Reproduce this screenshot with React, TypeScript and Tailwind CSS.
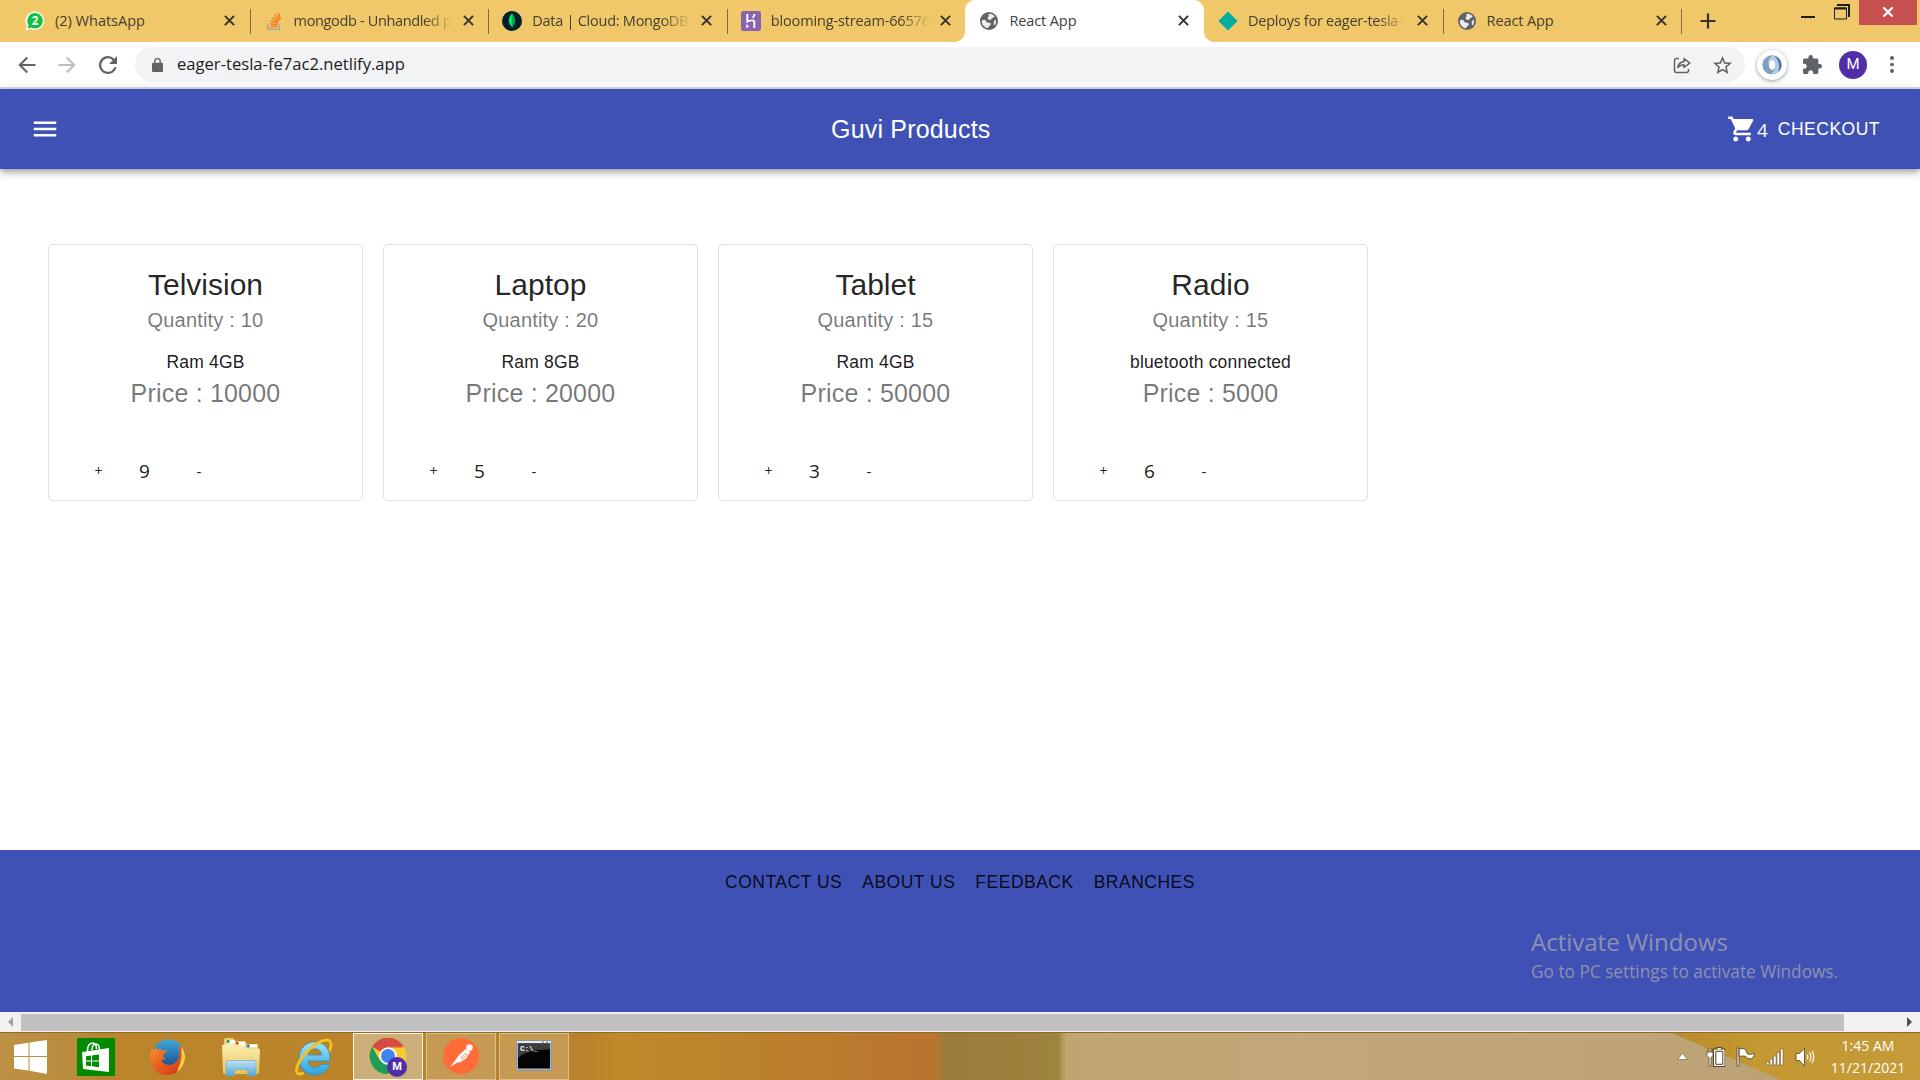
import React from "react";

const ui = "font-['Open_Sans','Noto_Sans',sans-serif]";

function WhatsAppIcon() {
  return (
    <svg viewBox="0 0 20 20" className="h-5 w-5">
      <path d="M10 .6a9.2 9.2 0 0 1 0 18.4c-1.400 0-2.700-.3-3.900-.9L.6 19.600l1.300-5A9.200 9.200 0 0 1 10 .6Z" fill="#fff" />
      <path d="M10 2a7.800 7.800 0 0 1 0 15.600c-1.400 0-2.600-.3-3.700-1L2.600 17.600l1-3.500A7.800 7.800 0 0 1 10 2Z" fill="#12c143" />
      <text x="10" y="14" textAnchor="middle" fontSize="11.500" fontWeight="700" fill="#fff" fontFamily="Open Sans, sans-serif">2</text>
    </svg>
  );
}

function StackIcon() {
  return (
    <svg viewBox="0 0 20 20" className="h-5 w-5" fill="none">
      <path d="M3.800 12.500v5.800h11.600v-5.800" stroke="#a9a99c" strokeWidth="1.500" />
      <g stroke="#f48024" strokeWidth="1.700">
        <path d="M6 15.500h7.400M6.200 12.800l7.300.8M6.900 9.900l7 2M8.400 6.800l6.200 3.700M10.900 3.800l4.500 5.800M14.300 2l2 7" />
      </g>
    </svg>
  );
}

function MongoIcon() {
  return (
    <svg viewBox="0 0 20 20" className="h-5 w-5">
      <circle cx="10" cy="10" r="10" fill="#001e2b" />
      <path d="M10 2.500c2 2.400 3.200 4.500 3.200 7 0 2.700-1.400 4.600-2.800 5.700L10.200 17h-.4l-.2-1.800c-1.400-1.100-2.800-3-2.800-5.700 0-2.500 1.200-4.600 3.200-7Z" fill="#00ed64" />
      <path d="M10 2.500c2 2.400 3.200 4.500 3.200 7 0 2.700-1.400 4.600-2.800 5.700L10.200 17H10Z" fill="#00a84a" />
    </svg>
  );
}

function HerokuIcon() {
  return (
    <svg viewBox="0 0 20 20" className="h-5 w-5">
      <rect width="20" height="20" rx="2.500" fill="#8a63ae" />
      <path d="M6.300 3v7.600c2-1 7-2.300 7 .4v6" fill="none" stroke="#fff" strokeWidth="1.900" />
      <path d="M13.500 3c-.1 1.500-.8 2.700-1.700 3.800" fill="none" stroke="#fff" strokeWidth="1.900" />
      <path d="m5.400 13 2.600 2.200-2.600 2.200Z" fill="#fff" />
    </svg>
  );
}

function GlobeIcon() {
  return (
    <svg viewBox="0 0 20 20" className="h-5 w-5">
      <circle cx="10" cy="10" r="9" fill="#5f6368" />
      <path d="M2.800 9.500c1.300-.8 2.600-.9 3.700-.3 1 .7.600 2 1.700 2.400 1.300.3 2.500-.4 3.300.6.900 1.300-.3 2.400-1.300 3-.8.600-.6 1.500-1.600 2C5 16.600 2.600 13.500 2.800 9.500ZM9.500 2.900c2.600-.3 4.800.8 6.100 2.600-.2 1.300-1.500 1-2.400 1.400-.9.500-.4 1.600-1.400 1.900-1 .3-2.300-.1-3-.9-.8-1.100.3-1.900.9-2.700.4-.6-.4-1.400-.2-2.300ZM16.700 8.500c.6 2.200.3 4.200-1 5.900-.8-.4-1.100-1.400-1-2.400.1-1.300.8-2.900 2-3.500Z" fill="#fff" fillOpacity=".88" />
    </svg>
  );
}

function NetlifyIcon() {
  return (
    <svg viewBox="0 0 20 20" className="h-5 w-5">
      <path d="M10 .6 19.600 10 10 19.400.4 10Z" fill="#00ad9f" />
    </svg>
  );
}

function CloseX({ className = "" }: { className?: string }) {
  return (
    <svg viewBox="0 0 12 12" className={`h-[11px] w-[11px] shrink-0 ${className}`}>
      <path d="M1 1l10 10M11 1 1 11" stroke="#33312c" strokeWidth="2.100" />
    </svg>
  );
}

type Tab = { icon: React.ReactNode; title: string; track: string; active?: boolean; fade?: boolean; sep?: boolean };

const tabs: Tab[] = [
  { icon: <WhatsAppIcon />, title: "(2) WhatsApp", track: "tracking-[0px]", sep: true },
  { icon: <StackIcon />, title: "mongodb - Unhandled p", track: "tracking-[-0.350px]", fade: true, sep: true },
  { icon: <MongoIcon />, title: "Data | Cloud: MongoDB", track: "tracking-[-0.250px]", fade: true, sep: true },
  { icon: <HerokuIcon />, title: "blooming-stream-66576", track: "tracking-[-0.150px]", fade: true },
  { icon: <GlobeIcon />, title: "React App", track: "tracking-[-0.100px]", active: true },
  { icon: <NetlifyIcon />, title: "Deploys for eager-tesla-", track: "tracking-[-0.250px]", fade: true, sep: true },
  { icon: <GlobeIcon />, title: "React App", track: "tracking-[-0.100px]", sep: true },
];

function TabStrip() {
  return (
    <div className={`flex h-[42px] shrink-0 bg-[#f0c869] pl-[11px] ${ui}`}>
      {tabs.map((t, i) => (
        <div key={i} className={`relative flex h-full w-[238.600px] shrink-0 items-center pb-px pl-[14px] ${t.active ? "rounded-t-[10px] bg-white" : ""}`}>
          {t.active && (
            <>
              <span className="absolute bottom-0 -left-[10px] h-[10px] w-[10px] bg-[radial-gradient(circle_at_0_0,transparent_9.500px,white_10px)]" />
              <span className="absolute -right-[10px] bottom-0 h-[10px] w-[10px] bg-[radial-gradient(circle_at_100%_0,transparent_9.500px,white_10px)]" />
            </>
          )}
          <span className="shrink-0">{t.icon}</span>
          <span className={`ml-[10px] w-[159px] shrink-0 text-[14.500px] leading-5 whitespace-nowrap ${t.track} ${t.active ? "text-[#3c4043]" : "text-[#45402f]"} ${t.fade ? "[mask-image:linear-gradient(to_right,black_82%,transparent_100%)]" : ""}`}>
            {t.title}
          </span>
          <CloseX className="ml-[10px]" />
          {t.sep && <span className="absolute top-[9px] -right-px h-[25px] w-px bg-[#7d6c40]" />}
        </div>
      ))}
      <svg viewBox="0 0 16 16" className="mt-[13px] ml-[19px] h-4 w-4"><path d="M8 .5v15M.5 8h15" stroke="#33312c" strokeWidth="2.200" /></svg>
      <div className="ml-auto flex items-start">
        <span className="mt-4 h-[2px] w-[14px] bg-[#1e1e1e]" />
        <svg viewBox="0 0 16 16" className="mt-1 ml-[19px] h-4 w-4" fill="none">
          <path d="M3 1h12v12" stroke="#1e1e1e" strokeWidth="2" />
          <path d="M.5 4h12v11H.5Z" stroke="#1e1e1e" />
          <path d="M.5 4.500h12" stroke="#1e1e1e" strokeWidth="2" />
        </svg>
        <div className="mr-[3px] ml-[9px] flex h-[25px] w-[58px] items-center justify-center bg-[#c75050] pb-[2px]">
          <svg viewBox="0 0 12 10" className="h-[10px] w-3"><path d="M1.500.5l9 9M10.500.5l-9 9" stroke="#fff" strokeWidth="2.200" /></svg>
        </div>
      </div>
    </div>
  );
}

function Toolbar() {
  return (
    <div className={`flex h-[47px] shrink-0 items-center border-b-2 border-[#d8d9dc] bg-white ${ui}`}>
      <svg viewBox="0 0 18 18" className="ml-[18px] h-[18px] w-[18px]" fill="none" stroke="#5f6368" strokeWidth="2"><path d="M17.500 9H2M9.300 1.500 1.800 9l7.500 7.500" /></svg>
      <svg viewBox="0 0 18 18" className="ml-[22px] h-[18px] w-[18px]" fill="none" stroke="#bcbec1" strokeWidth="2"><path d="M.5 9H16M8.700 1.500 16.200 9l-7.500 7.500" /></svg>
      <svg viewBox="4 4 16 16" className="ml-[22.500px] h-[18px] w-[18px]" fill="#5f6368"><path d="M17.650 6.350A7.958 7.958 0 0 0 12 4a8 8 0 1 0 7.730 10h-2.080A6 6 0 1 1 12 6c1.660 0 3.140.69 4.220 1.780L13 11h7V4l-2.350 2.350z" /></svg>
      <div className="ml-[18.500px] flex h-[35px] w-[1610px] items-center rounded-full bg-[#f1f3f4]">
        <svg viewBox="0 0 12 15" className="ml-[17px] h-[14px] w-[11px]"><rect y="5" width="12" height="10" rx="1.300" fill="#5f6368" /><path d="M3 6V3.600a3 3 0 0 1 6 0V6" fill="none" stroke="#5f6368" strokeWidth="1.500" /></svg>
        <span className="ml-[14px] text-[16.600px] text-[#202124]">eager-tesla-fe7ac2.netlify.app</span>
        <svg viewBox="0 0 18 18" className="mr-[22px] ml-auto h-[18px] w-[18px]" fill="none" stroke="#5f6368" strokeWidth="1.500">
          <path d="M6 2.500H3.500a2 2 0 0 0-2 2v10a2 2 0 0 0 2 2h10a2 2 0 0 0 2-2V13" />
          <path d="M4.800 11.500c.4-3.700 2.700-5.500 6.200-5.700V2.500L16.800 7.200 11 11.500V8.700c-2.800 0-4.700.9-6.200 2.800Z" strokeLinejoin="round" />
        </svg>
        <svg viewBox="2 2 20 19" className="mr-[13px] h-[18px] w-[19px]" fill="#5f6368"><path d="M22 9.240l-7.190-.62L12 2 9.190 8.630 2 9.240l5.460 4.730L5.820 21 12 17.270 18.180 21l-1.630-7.030L22 9.240zM12 15.400l-3.760 2.270 1-4.280-3.320-2.880 4.380-.38L12 6.100l1.710 4.040 4.380.38-3.320 2.880 1 4.280L12 15.400z" /></svg>
      </div>
      <div className="ml-3 flex h-[30px] w-[30px] items-center justify-center rounded-full bg-white shadow-[0_1px_4px_rgba(0,0,0,.4)]">
        <svg viewBox="0 0 20 20" className="h-5 w-5">
          <path d="M12 .6A9.500 9.500 0 0 0 8 19.300C12 19 14.500 14 13.300 10 12.500 6.500 9 5.500 7 8c0-3 2-6 5-7.400Z" fill="#7f9fc2" />
          <path d="M8 19.300A9.500 9.500 0 0 0 12 .6C8 1 5.500 6 6.700 10c.8 3.500 4.300 4.500 6.300 2 0 3-2 6-5 7.300Z" fill="#b5cbe0" />
          <path d="M12 .6a9.500 9.500 0 0 1 4 16.700c2-5 1.500-12-4-16.700Z" fill="#4f7aa8" />
          <ellipse cx="10" cy="10" rx="3" ry="4.700" fill="#fff" />
        </svg>
      </div>
      <svg viewBox="2 1 21 21" className="ml-4 h-[19px] w-[19px]" fill="#5f6368"><path d="M20.500 11H19V7c0-1.100-.9-2-2-2h-4V3.500a2.500 2.500 0 0 0-5 0V5H4c-1.100 0-1.990.9-1.990 2v3.800H3.500c1.490 0 2.700 1.210 2.700 2.700s-1.210 2.700-2.700 2.700H2V20c0 1.100.9 2 2 2h3.800v-1.500c0-1.490 1.210-2.700 2.700-2.700s2.700 1.210 2.700 2.700V22H17c1.100 0 2-.9 2-2v-4h1.500a2.500 2.500 0 0 0 0-5z" /></svg>
      <div className="ml-[17px] flex h-7 w-7 items-center justify-center rounded-full bg-[#512da8] font-['Roboto',sans-serif] text-[15px] text-white">M</div>
      <div className="ml-[23px] flex flex-col gap-[3px]">
        <span className="h-[3.500px] w-[3.500px] rounded-full bg-[#5f6368]" />
        <span className="h-[3.500px] w-[3.500px] rounded-full bg-[#5f6368]" />
        <span className="h-[3.500px] w-[3.500px] rounded-full bg-[#5f6368]" />
      </div>
    </div>
  );
}

function AppBar() {
  return (
    <header className="relative flex h-20 shrink-0 items-center bg-[#3f51b5] px-[30px] text-white shadow-[0_2.500px_5px_-1px_rgba(0,0,0,.2),0_5px_6px_0_rgba(0,0,0,.14),0_1px_12px_0_rgba(0,0,0,.12)]">
      <svg viewBox="0 0 24 24" className="h-[30px] w-[30px]" fill="currentColor"><path d="M3 18h18v-2H3v2zm0-5h18v-2H3v2zm0-7v2h18V6H3z" /></svg>
      <h1 className="ml-[771px] text-[25px] leading-10 tracking-[0.190px]">Guvi Products</h1>
      <svg viewBox="0 0 24 24" className="ml-auto h-[30px] w-[30px]" fill="currentColor"><path d="M7 18c-1.100 0-1.990.9-1.990 2S5.900 22 7 22s2-.9 2-2-.9-2-2-2zM1 2v2h2l3.600 7.590-1.350 2.450c-.16.28-.25.61-.25.960 0 1.100.9 2 2 2h12v-2H7.420c-.14 0-.25-.11-.25-.25l.03-.12.9-1.630h7.450c.75 0 1.410-.41 1.750-1.030l3.580-6.490c.08-.14.12-.31.12-.48 0-.55-.45-1-1-1H5.210l-.94-2H1zm16 16c-1.100 0-1.990.9-1.990 2s.89 2 1.990 2 2-.9 2-2-.9-2-2-2z" /></svg>
      <span className={`mt-[3px] text-[19px] ${ui}`}>4</span>
      <span className="mr-[10px] ml-[10px] text-[17.500px] tracking-[0.500px]">CHECKOUT</span>
    </header>
  );
}

const products = [
  { name: "Telvision", quantity: 10, detail: "Ram 4GB", price: 10000, count: 9 },
  { name: "Laptop", quantity: 20, detail: "Ram 8GB", price: 20000, count: 5 },
  { name: "Tablet", quantity: 15, detail: "Ram 4GB", price: 50000, count: 3 },
  { name: "Radio", quantity: 15, detail: "bluetooth connected", price: 5000, count: 6 },
];

function ProductCard({ p }: { p: (typeof products)[number] }) {
  return (
    <article className="flex h-[257px] w-[315px] shrink-0 flex-col rounded-[5px] border border-[#e0e0e0] bg-white pt-5 text-center">
      <h2 className="text-[30px] leading-10 text-black/87">{p.name}</h2>
      <p className="text-[20px] leading-[30px] tracking-[0.190px] text-black/54">Quantity : {p.quantity}</p>
      <p className="mt-[15px] text-[17.500px] leading-[25px] tracking-[0.180px] text-black/90">{p.detail}</p>
      <p className="text-[25px] leading-9 tracking-[0.190px] text-black/54">Price : {p.price}</p>
      <div className={`mt-[43px] flex h-[34px] items-center text-[#212121] ${ui}`}>
        <span className="w-[99px] text-center text-[14px] leading-5">+</span>
        <span className="-ml-[10px] w-[13px] text-center text-[19px] leading-6">{p.count}</span>
        <span className="ml-[43px] w-[10px] text-center text-[15px] leading-5">-</span>
      </div>
    </article>
  );
}

function StartIcon() {
  return (
    <svg viewBox="0 0 34 34" className="h-[34px] w-[34px]" fill="#fff">
      <path d="M0 5 14.500 2.800V16H0ZM15.500 2.600 33 0v16H15.500ZM0 17h14.500v13.500L0 28.500ZM15.500 17H33v17l-17.500-3.200Z" />
    </svg>
  );
}

function StoreIcon() {
  return (
    <svg viewBox="0 0 38 38" className="h-[38px] w-[38px]">
      <rect width="38" height="38" fill="#008a00" />
      <path d="M10.500 14c-.5-6 2-9 5-9s4 3 4 6M15 12c0-4 2-6 4-6 2.500 0 3.500 3 3.500 6" fill="none" stroke="#fff" strokeWidth="1.500" />
      <path d="m5 14 27-4v24L6 31Z" fill="#fff" />
      <path d="m9 18.300 5-.7v4.900H9ZM15 17.500l7-1v6h-7ZM9 23.500h5v4.700l-5-.6ZM15 23.500h7v5.700l-7-.9Z" fill="#008a00" />
    </svg>
  );
}

function FirefoxIcon() {
  return (
    <svg viewBox="0 0 38 38" className="h-[38px] w-[38px]">
      <defs>
        <linearGradient id="fx" x1="0" y1="0" x2="1" y2="1"><stop offset="0" stopColor="#f39a2e" /><stop offset=".5" stopColor="#e65a1f" /><stop offset="1" stopColor="#c9381c" /></linearGradient>
        <linearGradient id="fxb" x1="0" y1="0" x2="0" y2="1"><stop offset="0" stopColor="#3fa9dd" /><stop offset="1" stopColor="#123a7d" /></linearGradient>
      </defs>
      <circle cx="19.500" cy="18" r="16.500" fill="url(#fxb)" />
      <path d="M32 8c4 5 5 11 3 17-3 8-9 12-17 12C8 37 1 29.500 1 20c0-4 .8-7.500 3-10.500l.5 3c1-1.500 2-3 3.500-3.500-.3 1.500.2 2 .5 2.500 2.500-.8 4 0 6 1.200 1.500-.8 3-.7 3.500-.2-1 2.500-4 3.500-4 5.500 0 1.200 1.500 1.500 3 1.500-1 2.500-3.500 2-5 3 2.500 4 8.500 6 13 3 5-3 6.500-9 4.500-16.500Z" fill="url(#fx)" />
      <path d="M32 8c4 5 5 11 3 17-2 4.500-4 7-7 9 2-6 4-10 4.500-15 .2-4 .2-8-.5-11Z" fill="#fcd23c" />
    </svg>
  );
}

function ExplorerIcon() {
  return (
    <svg viewBox="0 0 40 38" className="h-[38px] w-10">
      <defs>
        <linearGradient id="fold" x1="0" y1="0" x2="0" y2="1"><stop offset="0" stopColor="#fbeeb2" /><stop offset="1" stopColor="#e4c558" /></linearGradient>
        <linearGradient id="stand" x1="0" y1="0" x2="0" y2="1"><stop offset="0" stopColor="#bfe2f5" /><stop offset="1" stopColor="#58a4d2" /></linearGradient>
      </defs>
      <path d="M3 6V2q0-2 2-2h7l2 3h10l2 3h11v6H3Z" fill="#e9cf77" />
      <path d="M6 2h8v4H6Z" fill="#fff" /><path d="M6 2h2.500v3H6Z" fill="#38964a" />
      <path d="M15 4h9v4h-9Z" fill="#fff" /><path d="M15 4h2.500v3H15Z" fill="#c8402c" />
      <path d="M1 8q0-1.500 1.500-1.500H22l3 4h12.500Q39 10.500 39 12l-1 22.500q0 1.500-1.500 1.500h-33Q2 36 2 34.500Z" fill="url(#fold)" />
      <path d="M26 6.500h10v3H26Z" fill="#fff" /><path d="M26 6.500h2.500v3H26Z" fill="#2e76ae" />
      <path d="M7 22.500h26q2 0 2 2V38H26.500v-6.500h-13V38H5V24.500q0-2 2-2Z" fill="url(#stand)" stroke="#6fb1d8" strokeWidth=".8" />
    </svg>
  );
}

function IEIcon() {
  return (
    <svg viewBox="0 0 38 38" className="h-[38px] w-[38px]">
      <defs><linearGradient id="ie" x1="0" y1="0" x2="0" y2="1"><stop offset="0" stopColor="#9be4fb" /><stop offset="1" stopColor="#2aa3e0" /></linearGradient></defs>
      <path d="M19.500 4C28.500 4 35 10.500 35 20v3H13c.4 4 3 6.500 7 6.500 2.800 0 4.500-1.200 5.600-3.200H34.500C32.500 33 27 37 19.500 37 10.500 37 4 30 4 20.500S10.500 4 19.500 4Zm-6.500 13h13.800c-.4-3.700-3-6.200-6.800-6.200s-6.500 2.500-7 6.200Z" fill="url(#ie)" stroke="#2b86bd" strokeWidth=".7" />
      <path d="M35 12c2.500-7 .5-10.500-4-9.800C22 3 8 15 3 26.500 0 33 1.500 37.500 7.500 35.500" fill="none" stroke="#f6c21c" strokeWidth="2.800" strokeLinecap="round" />
    </svg>
  );
}

function ChromeIcon() {
  return (
    <svg viewBox="0 0 38 38" className="h-[38px] w-[38px]">
      <circle cx="19" cy="19" r="18.300" fill="#fcc934" />
      <path d="M19 19 3.150 9.850A18.300 18.300 0 0 1 34.850 9.850H19Z" fill="#d64b3f" />
      <path d="M3.150 9.850A18.300 18.300 0 0 0 19 37.300l8-13.700-8 4.600-8-4.600Z" fill="#1e9d58" />
      <path d="M34.850 9.850H19v9Z" fill="#d64b3f" />
      <path d="M19 10.500h16.200a18.300 18.300 0 0 1-16.200 26.800l8-13.700Z" fill="#fcc934" />
      <circle cx="19" cy="19" r="8.700" fill="#fff" />
      <circle cx="19" cy="19" r="7" fill="#3f83ee" />
    </svg>
  );
}

function PostmanIcon() {
  return (
    <svg viewBox="0 0 36 36" className="h-9 w-9">
      <circle cx="18" cy="18" r="18" fill="#ff6c37" />
      <circle cx="26.500" cy="9.500" r="3.200" fill="#fff" />
      <path d="M22.500 11 27.500 14l-4.500 6.500-5.500 3.700-2.500 0-7.500 4.300 5-6.500 3.500-5Z" fill="#fff" />
      <path d="m23.500 14.500-6 6M25 16l-6.500 6" stroke="#ff6c37" strokeWidth=".8" />
    </svg>
  );
}

function TerminalIcon() {
  return (
    <svg viewBox="0 0 36 31" className="h-[31px] w-9">
      <rect x=".5" y=".5" width="35" height="30" rx="1" fill="#a9b4c0" stroke="#8896a6" />
      <rect x="1" y="1" width="34" height="2" fill="#e6ebf0" />
      <path d="M26 2h2M30 2h2" stroke="#66727f" />
      <rect x="2" y="3.500" width="32" height="25" fill="#050505" />
      <path d="M2 3.500h32v6C20 9 8 12 2 18Z" fill="#3e3e3e" />
      <text x="4" y="11" fontSize="7.500" fontWeight="700" fill="#fff" fontFamily="Liberation Mono, monospace">C:\_</text>
    </svg>
  );
}

function Taskbar() {
  return (
    <footer className={`relative flex h-12 shrink-0 items-center overflow-hidden border-t border-[#8f6a2a] bg-[linear-gradient(90deg,#bd9145_0,#b98a3a_84px,#bb852c_100px,#ba832b_590px,#c08a29_620px,#bd852c_700px,#b9742f_935px,#9a7c3a_945px,#9d843f_1058px,#bfa671_1066px,#c2a879_1300px,#bda376_1700px,#b79f72_1920px)] ${ui}`}>
      <div className="absolute inset-0 bg-[linear-gradient(90deg,#b98a2b_1670px,#c49832_1760px,#c49b38_1920px)] [clip-path:polygon(1672px_0,1920px_0,1920px_100%,1782px_100%)]" />
      <div className="relative flex h-full w-full items-center">
        <div className="ml-[13.500px]"><StartIcon /></div>
        <div className="ml-[29.500px]"><StoreIcon /></div>
        <div className="ml-[34px]"><FirefoxIcon /></div>
        <div className="ml-[34px]"><ExplorerIcon /></div>
        <div className="ml-[34px]"><IEIcon /></div>
        <div className="relative ml-5 flex h-[47px] w-[70px] items-center justify-center border border-[#fff3d8] bg-[#cdb383]/90 pb-px">
          <ChromeIcon />
          <span className="absolute top-[23px] left-[33px] flex h-5 w-5 items-center justify-center rounded-full bg-[#512da8] font-['Roboto',sans-serif] text-[11px] font-bold text-white">M</span>
        </div>
        <div className="ml-[3px] flex h-[47px] w-[70px] items-center justify-center border border-[#dcc08b] bg-[#c8a05c]/80 pb-[2px]"><PostmanIcon /></div>
        <div className="ml-[3px] flex h-[47px] w-[70px] items-center justify-center border border-[#dcc08b] bg-[#c8a05c]/80 pb-[3px]"><TerminalIcon /></div>
        <svg viewBox="0 0 11 7" className="ml-auto h-[7px] w-[11px]"><path d="M5.500 .5 10.500 6.500H.5Z" fill="#fff" stroke="#6e5c3b" strokeWidth=".6" /></svg>
        <svg viewBox="0 0 20 20" className="ml-[18px] h-5 w-5">
          <path d="M2 1v4M6 1v4M1 5h6v3.500L5 10.500V19H3v-8.500L1 8.500Z" fill="#fff" stroke="#5a4a2c" strokeWidth=".8" />
          <path d="M11 2.500V1h4v1.500h3V19H8V2.500Z" fill="none" stroke="#5a4a2c" strokeWidth="2.200" />
          <path d="M8.500 3h9.500v15.500H8.500ZM11.500 1.500h3.500" fill="#fff" stroke="#fff" />
          <path d="M9.800 4.300h7v13h-7Z" fill="#fff" stroke="#4a3f2a" />
        </svg>
        <svg viewBox="0 0 20 20" className="ml-[10px] h-5 w-5"><path d="M1 1h2v18H1ZM3 2c3-1 5-.5 7 1l.5 2 1 2c2 1 4 0 7-.5-.5 4-3 6-6.500 5-1-.4-1.500-1-2-2-2-.8-4-.5-7 0Z" fill="#fff" stroke="#4e4028" strokeWidth=".8" /></svg>
        <svg viewBox="0 0 18 18" className="ml-[10px] h-[18px] w-[18px]"><g fill="#fff" stroke="#5a4a2c" strokeWidth=".5"><path d="M.5 14h2.500v3H.5ZM4 11h2.500v6H4ZM7.500 8H10v9H7.500ZM11 4.500h2.500V17H11ZM14.500 1H17v16h-2.500Z" /></g></svg>
        <svg viewBox="0 0 20 20" className="ml-[11px] h-5 w-5"><path d="M1 6.500h3.500L9.500 1v18l-5-5.500H1Z" fill="#fff" stroke="#4e4028" strokeWidth=".8" /><path d="M12 7.500c1 1.500 1 3.500 0 5M14.500 5.500c2 3 2 6 0 9M17 4c2.500 4 2.500 8 0 12" fill="none" stroke="#fff" strokeWidth="1.200" /></svg>
        <div className="mr-[9px] ml-[10px] w-[86px] text-center text-[14px] leading-[22px] whitespace-nowrap text-white">
          <div>1:45 AM</div>
          <div>11/21/2021</div>
        </div>
      </div>
    </footer>
  );
}

export default function App() {
  return (
    <div className="relative flex h-[1080px] w-[1920px] flex-col overflow-hidden bg-white font-['Liberation_Sans',Arial,sans-serif]">
      <TabStrip />
      <Toolbar />
      <AppBar />
      <main className="flex flex-1 items-start gap-5 pt-[75px] pl-12">
        {products.map((p) => (
          <ProductCard key={p.name} p={p} />
        ))}
      </main>
      <section className="flex h-[162px] shrink-0 justify-center gap-5 bg-[#3f51b5] pt-5 text-[17.500px] leading-[25px] tracking-[0.500px] text-black/87">
        <span>CONTACT US</span>
        <span>ABOUT US</span>
        <span>FEEDBACK</span>
        <span>BRANCHES</span>
      </section>
      <div className="flex h-5 shrink-0 items-center bg-[#f1f1f1]">
        <svg viewBox="0 0 5 10" className="ml-2 h-[10px] w-[5px]"><path d="M5 0v10L0 5Z" fill="#a3a3a3" /></svg>
        <span className="ml-2 h-[17px] w-[1823px] bg-[#c1c1c1]" />
        <svg viewBox="0 0 5 10" className="mr-2 ml-auto h-[10px] w-[5px]"><path d="M0 0v10l5-5Z" fill="#505050" /></svg>
      </div>
      <Taskbar />
      <div className={`absolute top-[924px] left-[1531px] text-[#8d91b0] ${ui}`}>
        <div className="text-[24px] leading-9">Activate Windows</div>
        <div className="text-[17.250px] leading-6">Go to PC settings to activate Windows.</div>
      </div>
    </div>
  );
}
